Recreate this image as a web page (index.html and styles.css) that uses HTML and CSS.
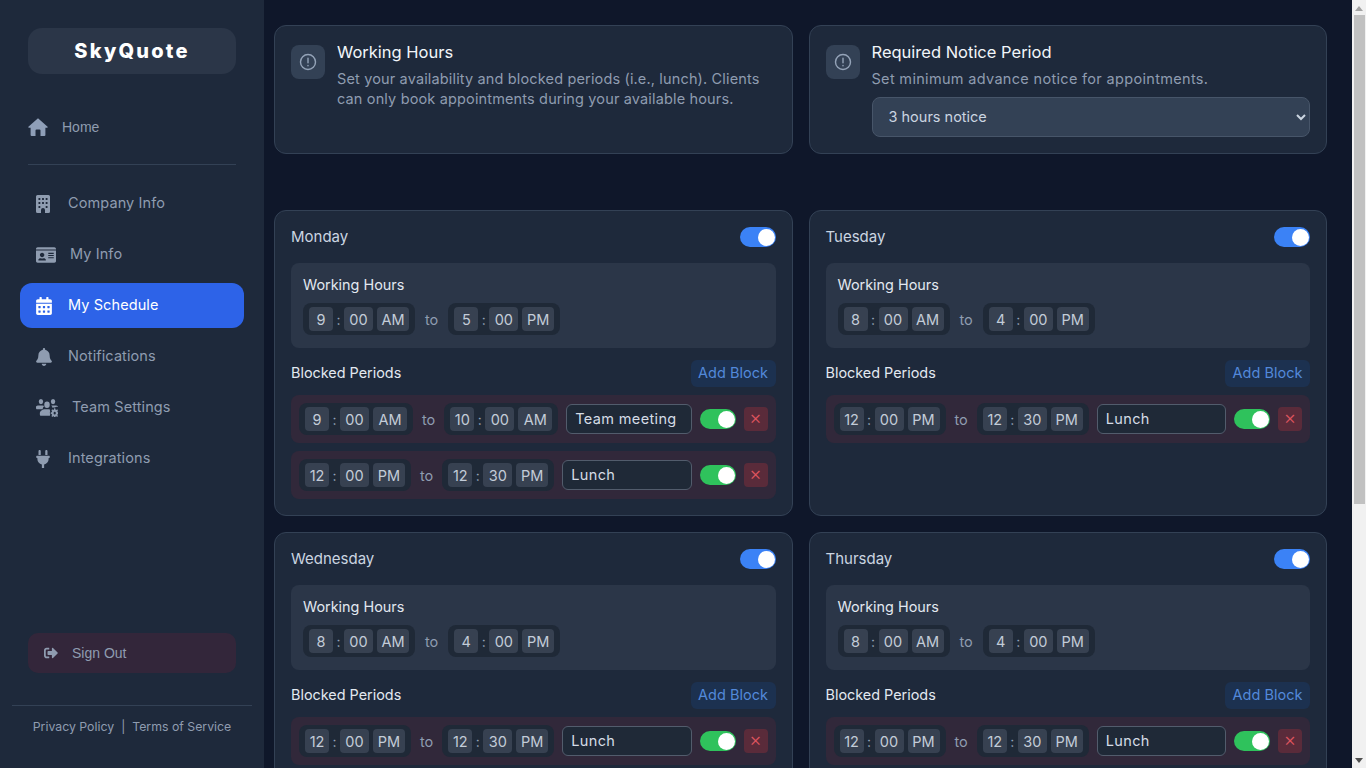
FILE: index.html
```html
<!DOCTYPE html>
<html lang="en">
<head>
<meta charset="utf-8">
<title>SkyQuote - My Schedule</title>
<link rel="stylesheet" href="styles.css">
</head>
<body>
<div class="app">
<aside class="sidebar">
  <div class="logo">SkyQuote</div>
  <a class="home"><svg class="ic-home" viewBox="0 0 20 18"><path fill="currentColor" d="M10 .3 19.600 8.700a.6.6 0 0 1-.4 1H17.400V17a1 1 0 0 1-1 1H12.500V12.500a1 1 0 0 0-1-1h-3a1 1 0 0 0-1 1V18H3.600a1 1 0 0 1-1-1V9.700H.8a.6.6 0 0 1-.4-1z"/></svg><span>Home</span></a>
  <div class="side-rule"></div>
  <nav class="nav">
    <a class="nav-item"><svg class="ic ic-bld" viewBox="0 0 14 18"><path fill="currentColor" fill-rule="evenodd" d="M1.500 0H12.500A1.500 1.500 0 0 1 14 1.500V16.500A1.500 1.500 0 0 1 12.500 18H9V15A2 2 0 0 0 5 15V18H1.500A1.500 1.500 0 0 1 0 16.500V1.500A1.500 1.500 0 0 1 1.500 0ZM2.500 3V5H4.300V3ZM6.100 3V5H7.900V3ZM9.700 3V5H11.500V3ZM2.500 7V9H4.300V7ZM6.100 7V9H7.900V7ZM9.700 7V9H11.500V7ZM2.500 11V13H4.300V11ZM9.700 11V13H11.500V11Z"/></svg><span>Company Info</span></a>
    <a class="nav-item"><svg class="ic ic-card" viewBox="0 0 576 512"><path fill="currentColor" d="M528 32H48C21.500 32 0 53.500 0 80v16h576V80c0-26.500-21.500-48-48-48zM0 432c0 26.500 21.500 48 48 48h480c26.500 0 48-21.500 48-48V128H0v304zm352-232c0-4.400 3.600-8 8-8h144c4.400 0 8 3.600 8 8v16c0 4.400-3.600 8-8 8H360c-4.400 0-8-3.600-8-8v-16zm0 64c0-4.400 3.600-8 8-8h144c4.400 0 8 3.600 8 8v16c0 4.400-3.600 8-8 8H360c-4.400 0-8-3.600-8-8v-16zm0 64c0-4.400 3.600-8 8-8h144c4.400 0 8 3.600 8 8v16c0 4.400-3.600 8-8 8H360c-4.400 0-8-3.600-8-8v-16zM176 192c35.300 0 64 28.700 64 64s-28.700 64-64 64-64-28.700-64-64 28.700-64 64-64zM67.100 396.200C75.500 370.500 99.600 352 128 352h8.200c12.300 5.100 25.700 8 39.800 8s27.600-2.900 39.800-8h8.200c28.400 0 52.500 18.500 60.900 44.200 3.200 9.900-5.200 19.800-15.600 19.800H82.700c-10.400 0-18.800-10-15.600-19.800z"/></svg><span>My Info</span></a>
    <a class="nav-item active"><svg class="ic ic-w16" viewBox="0 0 448 512"><path fill="currentColor" d="M0 464c0 26.500 21.500 48 48 48h352c26.500 0 48-21.500 48-48V192H0v272zm320-196c0-6.600 5.400-12 12-12h40c6.600 0 12 5.400 12 12v40c0 6.600-5.400 12-12 12h-40c-6.600 0-12-5.400-12-12v-40zm0 128c0-6.600 5.400-12 12-12h40c6.600 0 12 5.400 12 12v40c0 6.600-5.400 12-12 12h-40c-6.600 0-12-5.400-12-12v-40zM192 268c0-6.600 5.400-12 12-12h40c6.600 0 12 5.400 12 12v40c0 6.600-5.400 12-12 12h-40c-6.600 0-12-5.400-12-12v-40zm0 128c0-6.600 5.400-12 12-12h40c6.600 0 12 5.400 12 12v40c0 6.600-5.400 12-12 12h-40c-6.600 0-12-5.400-12-12v-40zM64 268c0-6.600 5.400-12 12-12h40c6.600 0 12 5.400 12 12v40c0 6.600-5.400 12-12 12H76c-6.600 0-12-5.400-12-12v-40zm0 128c0-6.600 5.400-12 12-12h40c6.600 0 12 5.400 12 12v40c0 6.600-5.400 12-12 12H76c-6.600 0-12-5.400-12-12v-40zM400 64h-48V16c0-8.800-7.200-16-16-16h-32c-8.800 0-16 7.200-16 16v48H160V16c0-8.800-7.200-16-16-16h-32c-8.800 0-16 7.200-16 16v48H48C21.500 64 0 85.500 0 112v48h448v-48c0-26.500-21.500-48-48-48z"/></svg><span>My Schedule</span></a>
    <a class="nav-item"><svg class="ic ic-w16" viewBox="0 0 448 512"><path fill="currentColor" d="M224 512c35.320 0 63.970-28.650 63.970-64H160.030c0 35.350 28.650 64 63.970 64zm215.390-149.710c-19.320-20.760-55.470-51.990-55.470-154.290 0-77.700-54.480-139.900-127.940-155.160V32c0-17.670-14.320-32-31.980-32s-31.980 14.330-31.980 32v20.840C118.560 68.100 64.080 130.300 64.080 208c0 102.300-36.150 133.530-55.470 154.290-6 6.450-8.660 14.160-8.610 21.710.11 16.400 12.980 32 32.100 32h383.800c19.120 0 32-15.600 32.100-32 .05-7.550-2.610-15.270-8.610-21.710z"/></svg><span>Notifications</span></a>
    <a class="nav-item"><svg class="ic ic-team" viewBox="0 32 640 448" preserveAspectRatio="none"><path fill="currentColor" d="M144 160a64 64 0 1 0 0-128 64 64 0 0 0 0 128zM496 160a64 64 0 1 0 0-128 64 64 0 0 0 0 128zM320 256a80 80 0 1 0 0-160 80 80 0 0 0 0 160zM96 192h96c17 0 33 6 45 16-24 20-40 50-43 80H32c-18 0-32-14-32-32v-32c0-18 43-32 96-32zM448 192h96c53 0 96 14 96 32v8c-30-14-66-8-90 14-22-6-46-4-66 8-4-22-16-42-36-54zM272 288h96c14 0 27 3 38 9-2 14 0 28 8 40-14 22-14 50 0 72-8 12-10 26-8 39H144c-18 0-32-14-32-32v-26c0-56 72-102 160-102z"/><path fill="currentColor" fill-rule="evenodd" d="M528 264h32l6 30 24 10 26-17 23 23-17 26 10 24 30 6v32l-30 6-10 24 17 26-23 23-26-17-24 10-6 30h-32l-6-30-24-10-26 17-23-23 17-26-10-24-30-6v-32l30-6 10-24-17-26 23-23 26 17 24-10zM544 352a32 32 0 1 0 0 64 32 32 0 0 0 0-64z"/></svg><span>Team Settings</span></a>
    <a class="nav-item"><svg class="ic ic-plug" viewBox="0 0 384 512"><path fill="currentColor" d="M256 144V32c0-17.700 14.300-32 32-32s32 14.300 32 32v112h-64zm112 16c8.800 0 16 7.200 16 16v32c0 8.800-7.200 16-16 16h-16v32c0 77.400-55 142-128 156.800V512h-64v-99.200C87 398 32 333.400 32 256v-32H16c-8.800 0-16-7.200-16-16v-32c0-8.800 7.200-16 16-16h352zM128 144H64V32C64 14.300 78.300 0 96 0s32 14.300 32 32v112z"/></svg><span>Integrations</span></a>
  </nav>
  <a class="signout"><svg class="ic-out" viewBox="0 0 512 512"><path fill="currentColor" d="M497 273 329 441c-15 15-41 4.500-41-17v-96H152c-13.300 0-24-10.700-24-24v-96c0-13.300 10.700-24 24-24h136V88c0-21.400 25.900-32 41-17l168 168c9.300 9.400 9.300 24.600 0 34zM192 436v-40c0-6.600-5.400-12-12-12H96c-17.700 0-32-14.300-32-32V160c0-17.700 14.300-32 32-32h84c6.600 0 12-5.400 12-12V76c0-6.600-5.400-12-12-12H96c-53 0-96 43-96 96v192c0 53 43 96 96 96h84c6.600 0 12-5.400 12-12z"/></svg><span>Sign Out</span></a>
  <footer class="side-foot"><a>Privacy Policy</a><i>|</i><a>Terms of Service</a></footer>
</aside>
<main class="main">
  <div class="grid">
    <section class="card info">
      <div class="info-ic"><svg viewBox="0 0 24 24"><circle cx="12" cy="12" r="9"/><path d="M12 7.500v5.500M12 16v.5"/></svg></div>
      <div class="info-body"><h2>Working Hours</h2><p>Set your availability and blocked periods (i.e., lunch). Clients can only book appointments during your available hours.</p></div>
    </section>
    <section class="card info">
      <div class="info-ic"><svg viewBox="0 0 24 24"><circle cx="12" cy="12" r="9"/><path d="M12 7.500v5.500M12 16v.5"/></svg></div>
      <div class="info-body"><h2>Required Notice Period</h2><p class="wide">Set minimum advance notice for appointments.</p>
        <select class="notice"><option>3 hours notice</option></select></div>
    </section>
  </div>
  <div class="grid days">

    <section class="card day">
      <div class="day-head"><span>Monday</span><b class="sw blue"></b></div>
      <div class="hours"><h3>Working Hours</h3>
        <div class="times"><div class="tg"><b class="t h1">9</b><u>:</u><b class="t m">00</b><b class="t ap">AM</b></div><em>to</em><div class="tg"><b class="t h1">5</b><u>:</u><b class="t m">00</b><b class="t ap">PM</b></div></div>
      </div>
      <div class="blk-head"><h3>Blocked Periods</h3><button class="add">Add Block</button></div>
      <div class="blk"><div class="tg"><b class="t h1">9</b><u>:</u><b class="t m">00</b><b class="t am">AM</b></div><em>to</em><div class="tg"><b class="t h1">10</b><u>:</u><b class="t m">00</b><b class="t am">AM</b></div><input class="name" value="Team meeting"><b class="sw green"></b><button class="del">&times;</button></div>
      <div class="blk"><div class="tg"><b class="t h1">12</b><u>:</u><b class="t m">00</b><b class="t ap">PM</b></div><em>to</em><div class="tg"><b class="t h1">12</b><u>:</u><b class="t m">30</b><b class="t ap">PM</b></div><input class="name" value="Lunch"><b class="sw green"></b><button class="del">&times;</button></div>
    </section>

    <section class="card day">
      <div class="day-head"><span>Tuesday</span><b class="sw blue"></b></div>
      <div class="hours"><h3>Working Hours</h3>
        <div class="times"><div class="tg"><b class="t h1">8</b><u>:</u><b class="t m">00</b><b class="t ap">AM</b></div><em>to</em><div class="tg"><b class="t h1">4</b><u>:</u><b class="t m">00</b><b class="t ap">PM</b></div></div>
      </div>
      <div class="blk-head"><h3>Blocked Periods</h3><button class="add">Add Block</button></div>
      <div class="blk"><div class="tg"><b class="t h1">12</b><u>:</u><b class="t m">00</b><b class="t ap">PM</b></div><em>to</em><div class="tg"><b class="t h1">12</b><u>:</u><b class="t m">30</b><b class="t ap">PM</b></div><input class="name" value="Lunch"><b class="sw green"></b><button class="del">&times;</button></div>
    </section>

    <section class="card day">
      <div class="day-head"><span>Wednesday</span><b class="sw blue"></b></div>
      <div class="hours"><h3>Working Hours</h3>
        <div class="times"><div class="tg"><b class="t h1">8</b><u>:</u><b class="t m">00</b><b class="t ap">AM</b></div><em>to</em><div class="tg"><b class="t h1">4</b><u>:</u><b class="t m">00</b><b class="t ap">PM</b></div></div>
      </div>
      <div class="blk-head"><h3>Blocked Periods</h3><button class="add">Add Block</button></div>
      <div class="blk"><div class="tg"><b class="t h1">12</b><u>:</u><b class="t m">00</b><b class="t ap">PM</b></div><em>to</em><div class="tg"><b class="t h1">12</b><u>:</u><b class="t m">30</b><b class="t ap">PM</b></div><input class="name" value="Lunch"><b class="sw green"></b><button class="del">&times;</button></div>
    </section>

    <section class="card day">
      <div class="day-head"><span>Thursday</span><b class="sw blue"></b></div>
      <div class="hours"><h3>Working Hours</h3>
        <div class="times"><div class="tg"><b class="t h1">8</b><u>:</u><b class="t m">00</b><b class="t ap">AM</b></div><em>to</em><div class="tg"><b class="t h1">4</b><u>:</u><b class="t m">00</b><b class="t ap">PM</b></div></div>
      </div>
      <div class="blk-head"><h3>Blocked Periods</h3><button class="add">Add Block</button></div>
      <div class="blk"><div class="tg"><b class="t h1">12</b><u>:</u><b class="t m">00</b><b class="t ap">PM</b></div><em>to</em><div class="tg"><b class="t h1">12</b><u>:</u><b class="t m">30</b><b class="t ap">PM</b></div><input class="name" value="Lunch"><b class="sw green"></b><button class="del">&times;</button></div>
    </section>

  </div>
</main>
<div class="scrollbar"><span class="arrow up"></span><span class="thumb"></span><span class="arrow down"></span></div>
</div>
</body>
</html>
```

FILE: styles.css
```css
* { box-sizing: border-box; }
html, body { height: 100%; overflow: hidden; }
body { margin: 0; font-family: Inter, "Liberation Sans", sans-serif; color: #e2e8f0; background: #0f172a; }
a { display: flex; align-items: center; }
h2, h3, p { margin: 0; font-weight: 400; }
.app { display: flex; height: 768px; overflow: hidden; }

.sidebar { flex: 0 0 264px; background: #1e293b; display: flex; flex-direction: column; color: #8f9cb0; }
.logo { margin: 28px 28px 0; height: 46px; border-radius: 14px; background: #2b3648; color: #fff; font-weight: 800; font-size: 20px; letter-spacing: 2.2px; display: flex; align-items: center; justify-content: center; }
.home { margin: 32px 28px 0; height: 42px; gap: 14px; font: 14px "Liberation Sans", sans-serif; }
.ic-home { width: 20px; height: 18px; color: #8f9fb8; }
.side-rule { margin: 16px 28px 0; height: 1px; background: #334155; }
.nav { margin: 16px 20px 0; display: flex; flex-direction: column; gap: 6px; }
.nav-item { height: 45px; padding-left: 16px; gap: 16px; border-radius: 12px; font-size: 14.500px; letter-spacing: .1px; }
.nav-item span { padding-bottom: 2px; }
.nav-item.active { background: #2d63e8; color: #fff; }
.ic { height: 18px; flex: none; }
.ic-bld { width: 14px; margin-right: 2px; }
.ic-plug { width: 14px; margin-right: 2px; }
.ic-w16 { width: 16px; }
.ic-card { width: 20px; margin-right: -2px; }
.ic-team { width: 22px; margin-right: -2px; }
.signout { margin: auto 28px 0; height: 40px; padding-left: 16px; gap: 14px; border-radius: 10px; background: #33263a; font: 14px "Liberation Sans", sans-serif; }
.ic-out { width: 14px; height: 14px; }
.side-foot { margin: 32px 12px 0; height: 63px; border-top: 1px solid #334155; display: flex; justify-content: center; align-items: flex-start; padding-top: 13px; font-size: 12.300px; }
.side-foot i { font-style: normal; margin: 0 7px; }

.main { flex: 1; min-width: 0; overflow: hidden; padding: 25px 25px 0 10px; }
.grid { display: grid; grid-template-columns: minmax(0, 1fr) minmax(0, 1fr); gap: 16px; }
.days { margin-top: 56px; }
.card { background: #1e293b; border: 1px solid #334155; border-radius: 12px; padding: 16px; }

.info { height: 129px; display: flex; gap: 12px; padding-top: 19px; }
.info-ic { flex: none; width: 34px; height: 34px; border-radius: 8px; background: #334155; display: flex; align-items: center; justify-content: center; }
.info-ic svg { width: 20px; height: 20px; fill: none; stroke: #94a3b8; stroke-width: 1.700; stroke-linecap: round; }
.info-body { flex: 1; min-width: 0; margin-top: -2px; }
.info-body h2 { font-size: 16.500px; line-height: 18px; color: #f1f5f9; }
.info-body p { margin-top: 8px; font-size: 14.500px; line-height: 20px; letter-spacing: .15px; color: #8f9cb0; }
.info-body .wide { letter-spacing: .32px; }
.notice { display: block; margin-top: 8px; width: 100%; height: 40px; padding: 0 12px 2px; border-radius: 8px; border: 1px solid #475569; background: #334155; color: #cbd5e1; font: 14.500px Inter, sans-serif; }

.day { padding: 0 16px 16px; }
.day-head { height: 52px; display: flex; align-items: center; justify-content: space-between; font-size: 15px; color: #cbd5e1; }
.day-head span { padding-bottom: 2px; }
.sw { position: relative; display: block; flex: none; width: 36px; height: 20px; border-radius: 10px; }
.sw::after { content: ""; position: absolute; right: 1px; top: 1.500px; width: 17px; height: 17px; border-radius: 50%; background: #fff; }
.blue { background: #3b82f6; }
.green { background: #2fc25c; }
.hours { height: 85px; padding: 12px 12px 0; border-radius: 8px; background: #2b3648; }
h3 { font-size: 14.400px; line-height: 20px; color: #e2e8f0; }
.times { margin-top: 8px; display: flex; align-items: center; gap: 9px; }
.times em { margin: 0 1px; }
em { font-style: normal; font-size: 14.500px; color: #8f9cb0; }
.tg { display: flex; align-items: center; height: 32px; padding: 0 6px; border-radius: 8px; background: #1f2937; }
.t { height: 24px; border-radius: 4px; background: #374151; color: #c3ccd8; font-weight: 400; font-size: 14.500px; display: flex; align-items: center; justify-content: center; }
.t.ap, .t.am { margin-left: 4px; }
.h1 { width: 24px; }
.m { width: 29px; }
.ap { width: 32px; }
.am { width: 34px; }
.tg u { text-decoration: none; width: 11px; text-align: center; font-size: 14px; color: #94a3b8; }
.blk-head { margin-top: 12px; height: 27px; display: flex; align-items: center; justify-content: space-between; }
.blk-head h3 { padding-bottom: 2px; }
.add { height: 27px; width: 85px; padding: 0 0 2px; border: 0; border-radius: 6px; background: #1c3150; color: #5389da; font: 14.500px Inter, sans-serif; }
.blk { margin-top: 8px; height: 48px; padding: 0 8px; border-radius: 8px; background: #31283a; display: flex; align-items: center; gap: 8px; }
.blk em { margin: 0 1px; }
.name { flex: 1; min-width: 0; height: 30px; padding: 0 8px 2px; border: 1px solid #525c6c; border-radius: 6px; background: #1f2937; color: #d5dce6; font: 14.500px Inter, sans-serif; letter-spacing: .35px; }
.del { flex: none; width: 24px; height: 24px; padding: 0 0 2px; border: 0; border-radius: 4px; background: #5a2b3a; color: #e0555f; font: 300 19px/20px Inter, sans-serif; }

.scrollbar { flex: 0 0 14px; height: 768px; background: #f1f1f1; display: flex; flex-direction: column; align-items: center; }
.thumb { width: 11px; height: 489px; margin-top: 4px; background: #c1c1c1; }
.arrow { width: 0; height: 0; border-left: 4px solid transparent; border-right: 4px solid transparent; }
.up { margin-top: 6px; border-bottom: 5px solid #a3a3a3; }
.down { margin-top: auto; margin-bottom: 5px; border-top: 5px solid #505050; }
```
